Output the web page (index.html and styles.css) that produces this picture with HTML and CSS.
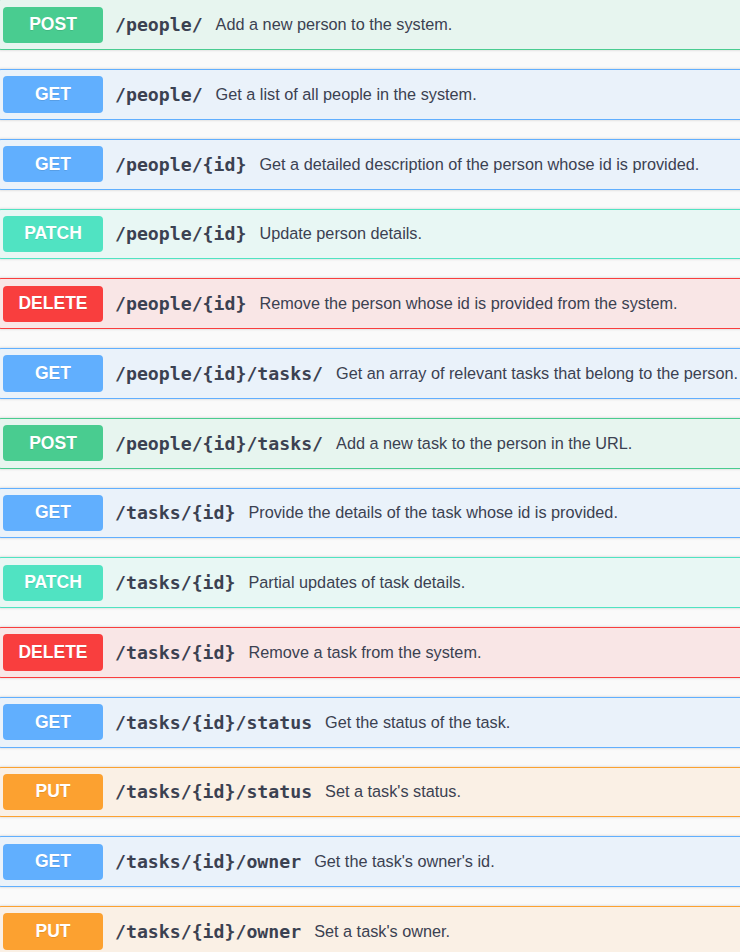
FILE: index.html
```html
<!DOCTYPE html>
<html>
<head>
<meta charset="utf-8">
<link rel="stylesheet" href="styles.css">
</head>
<body>
<div class="page">
<div class="ops">
  <div class="op post"><span class="method">POST</span><span class="path">/people/</span><span class="desc">Add a new person to the system.</span></div>
  <div class="op get"><span class="method">GET</span><span class="path">/people/</span><span class="desc">Get a list of all people in the system.</span></div>
  <div class="op get"><span class="method">GET</span><span class="path">/people/{id}</span><span class="desc">Get a detailed description of the person whose id is provided.</span></div>
  <div class="op patch"><span class="method">PATCH</span><span class="path">/people/{id}</span><span class="desc">Update person details.</span></div>
  <div class="op delete"><span class="method">DELETE</span><span class="path">/people/{id}</span><span class="desc">Remove the person whose id is provided from the system.</span></div>
  <div class="op get"><span class="method">GET</span><span class="path">/people/{id}/tasks/</span><span class="desc">Get an array of relevant tasks that belong to the person.</span></div>
  <div class="op post"><span class="method">POST</span><span class="path">/people/{id}/tasks/</span><span class="desc">Add a new task to the person in the URL.</span></div>
  <div class="op get"><span class="method">GET</span><span class="path">/tasks/{id}</span><span class="desc">Provide the details of the task whose id is provided.</span></div>
  <div class="op patch"><span class="method">PATCH</span><span class="path">/tasks/{id}</span><span class="desc">Partial updates of task details.</span></div>
  <div class="op delete"><span class="method">DELETE</span><span class="path">/tasks/{id}</span><span class="desc">Remove a task from the system.</span></div>
  <div class="op get"><span class="method">GET</span><span class="path">/tasks/{id}/status</span><span class="desc">Get the status of the task.</span></div>
  <div class="op put"><span class="method">PUT</span><span class="path">/tasks/{id}/status</span><span class="desc">Set a task's status.</span></div>
  <div class="op get"><span class="method">GET</span><span class="path">/tasks/{id}/owner</span><span class="desc">Get the task's owner's id.</span></div>
  <div class="op put"><span class="method">PUT</span><span class="path">/tasks/{id}/owner</span><span class="desc">Set a task's owner.</span></div>
</div>
</div>
</body>
</html>
```
FILE: styles.css
```css
html, body {
  margin: 0;
  padding: 0;
  background: #fafafa;
  overflow: hidden;
}
.page {
  width: 740px;
  height: 952px;
  overflow: hidden;
}
.ops {
  width: 800px;
  margin-left: -4.25px;
  margin-top: -0.75px;
  display: flex;
  flex-direction: column;
  gap: 19px;
}
.op {
  display: flex;
  align-items: center;
  border: 1px solid #000;
  border-radius: 5px;
  padding: 6.25px 6.25px;
  box-shadow: 0 0 3px rgba(0, 0, 0, 0.19);
  white-space: nowrap;
  color: #3b4151;
}
.method {
  flex: none;
  width: 100px;
  height: 36.25px;
  display: flex;
  align-items: center;
  justify-content: center;
  border-radius: 4px;
  color: #fff;
  font-family: "Liberation Sans", Arial, sans-serif;
  font-weight: 700;
  font-size: 17.5px;
  text-shadow: 0 1px 0 rgba(0, 0, 0, 0.1);
}
.path {
  margin-left: 12px;
  padding-right: 13px;
  font-family: "DejaVu Sans Mono", monospace;
  font-weight: 700;
  font-size: 18.2px;
  color: #3b4151;
}
.desc {
  font-family: "Liberation Sans", Arial, sans-serif;
  font-size: 16.25px;
  color: #3b4151;
}
.post { background: rgba(73, 204, 144, 0.1); border-color: #49cc90; }
.post .method { background: #49cc90; }
.get { background: rgba(97, 175, 254, 0.1); border-color: #61affe; }
.get .method { background: #61affe; }
.patch { background: rgba(80, 227, 194, 0.1); border-color: #50e3c2; }
.patch .method { background: #50e3c2; }
.delete { background: rgba(249, 62, 62, 0.1); border-color: #f93e3e; }
.delete .method { background: #f93e3e; }
.put { background: rgba(252, 161, 48, 0.1); border-color: #fca130; }
.put .method { background: #fca130; }
```
